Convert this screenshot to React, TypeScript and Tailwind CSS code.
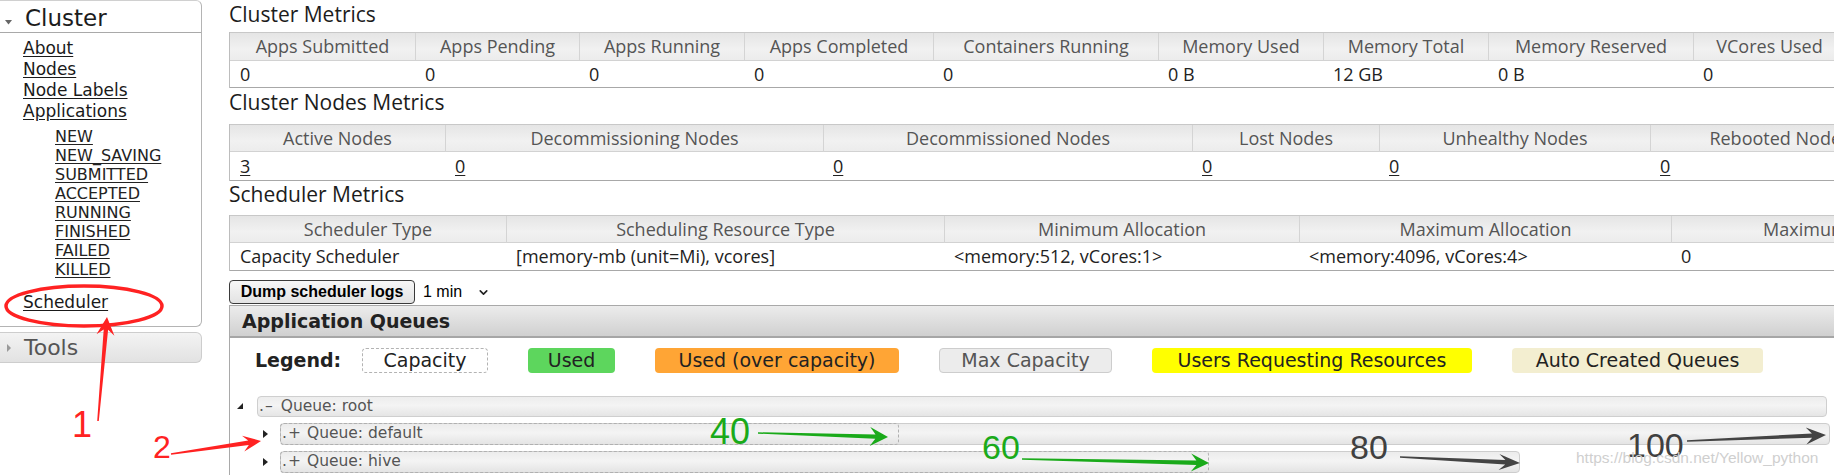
import React from "react";
import { ChevronDown } from "lucide-react";

type P = [number, number];

function arrowPoints(
  x1: number,
  y1: number,
  x2: number,
  y2: number,
  headLen: number,
  headHalf: number,
  tailHalf: number,
  shaftHalf: number
): string {
  const dx = x2 - x1;
  const dy = y2 - y1;
  const L = Math.hypot(dx, dy);
  const ux = dx / L;
  const uy = dy / L;
  const px = -uy;
  const py = ux;
  const bx = x2 - ux * headLen;
  const by = y2 - uy * headLen;
  const nx = bx + ux * headLen * 0.3;
  const ny = by + uy * headLen * 0.3;
  const pts: P[] = [
    [x1 + px * tailHalf, y1 + py * tailHalf],
    [nx + px * shaftHalf, ny + py * shaftHalf],
    [bx + px * headHalf, by + py * headHalf],
    [x2, y2],
    [bx - px * headHalf, by - py * headHalf],
    [nx - px * shaftHalf, ny - py * shaftHalf],
    [x1 - px * tailHalf, y1 - py * tailHalf],
  ];
  return pts.map((p) => `${p[0].toFixed(1)},${p[1].toFixed(1)}`).join(" ");
}

const t1Cols =
  "grid grid-cols-[185px_164px_165px_189px_225px_165px_165px_205px_152px_180px_200px]";
const t2Cols = "grid grid-cols-[215px_378px_369px_187px_271px_258px_220px]";
const t3Cols = "grid grid-cols-[276px_438px_355px_372px_496px]";

const headBg = "bg-[linear-gradient(to_bottom,#e5e5e5,#f1f1f1_60%,#ececec)]";

function HeadCell({ children, first }: { children: React.ReactNode; first?: boolean }) {
  return (
    <div
      className={
        first
          ? "flex items-center justify-center whitespace-nowrap text-[#555]"
          : "flex items-center justify-center whitespace-nowrap text-[#555] border-l border-[#d4d4d4]"
      }
    >
      {children}
    </div>
  );
}

function DataCell({ children, link }: { children: React.ReactNode; link?: boolean }) {
  return (
    <div className="flex items-center pl-[10px] whitespace-nowrap text-[#222]">
      {link ? <span className="underline underline-offset-2">{children}</span> : children}
    </div>
  );
}

function Sidebar() {
  const links = ["About", "Nodes", "Node Labels", "Applications"];
  const states = [
    "NEW",
    "NEW_SAVING",
    "SUBMITTED",
    "ACCEPTED",
    "RUNNING",
    "FINISHED",
    "FAILED",
    "KILLED",
  ];
  return (
    <aside className="w-[202px] shrink-0 font-['DejaVu_Sans',Verdana,sans-serif]">
      <div className="h-[327px] rounded-tr-[6px] rounded-br-[6px] border-t border-r border-b border-t-[#d0d0d0] border-r-[#b4b4b4] border-b-[#b4b4b4]">
        <div className="h-[32px] border-b border-[#a9a9a9] flex items-center pt-[2px] rounded-tr-[6px]">
          <svg width="25" height="20" viewBox="0 0 25 20" className="shrink-0">
            <polygon points="5,12 12,12 8.5,16.5" fill="#666" />
          </svg>
          <span className="text-[23px] leading-[28px] text-[#1c1c1c]">Cluster</span>
        </div>
        <div className="pl-[23px] pt-[5px] text-[#1a1a1a]">
          {links.map((l) => (
            <div key={l} className="text-[17px] leading-[21px]">
              <span className="underline underline-offset-[2px]">{l}</span>
            </div>
          ))}
          <div className="mt-[5px] pl-[32px]">
            {states.map((s) => (
              <div key={s} className="text-[16px] leading-[19px] text-[#222]">
                <span className="underline underline-offset-[2px]">{s}</span>
              </div>
            ))}
          </div>
          <div className="mt-[13px] text-[17px] leading-[21px]">
            <span className="underline underline-offset-[2px]">Scheduler</span>
          </div>
        </div>
      </div>
      <div className="mt-[5px] h-[31px] rounded-r-[6px] border border-l-0 border-[#cdcdcd] bg-[linear-gradient(to_bottom,#f3f3f3,#e2e2e2)] flex items-center">
        <svg width="24" height="20" viewBox="0 0 24 20" className="shrink-0">
          <polygon points="7,6 7,14 11,10" fill="#9a9a9a" />
        </svg>
        <span className="text-[22px] leading-[26px] text-[#555]">Tools</span>
      </div>
    </aside>
  );
}

function Main() {
  const sans = "font-['Open_Sans','Noto_Sans',sans-serif]";
  return (
    <main className={`ml-[27px] flex-1 min-w-0 flex flex-col ${sans}`}>
      {/* Cluster Metrics */}
      <div className="h-[32px] pt-[1px] text-[21px] leading-[26px] text-[#1c1c1c] whitespace-nowrap">
        Cluster Metrics
      </div>
      <div className="w-max border-l border-[#bdbdbd] text-[18px]">
        <div className={`${t1Cols} h-[29px] border-t border-b border-t-[#c8c8c8] border-b-[#d2d2d2] ${headBg}`}>
          <HeadCell first>Apps Submitted</HeadCell>
          <HeadCell>Apps Pending</HeadCell>
          <HeadCell>Apps Running</HeadCell>
          <HeadCell>Apps Completed</HeadCell>
          <HeadCell>Containers Running</HeadCell>
          <HeadCell>Memory Used</HeadCell>
          <HeadCell>Memory Total</HeadCell>
          <HeadCell>Memory Reserved</HeadCell>
          <HeadCell>VCores Used</HeadCell>
          <HeadCell>VCores Total</HeadCell>
          <HeadCell>VCores Reserved</HeadCell>
        </div>
        <div className={`${t1Cols} h-[27px] border-b border-[#a8a8a8] bg-white`}>
          <DataCell>0</DataCell>
          <DataCell>0</DataCell>
          <DataCell>0</DataCell>
          <DataCell>0</DataCell>
          <DataCell>0</DataCell>
          <DataCell>0 B</DataCell>
          <DataCell>12 GB</DataCell>
          <DataCell>0 B</DataCell>
          <DataCell>0</DataCell>
          <DataCell>12</DataCell>
          <DataCell>0</DataCell>
        </div>
      </div>

      {/* Cluster Nodes Metrics */}
      <div className="h-[36px] pt-[1px] text-[21px] leading-[26px] text-[#1c1c1c] whitespace-nowrap">
        Cluster Nodes Metrics
      </div>
      <div className="w-max border-l border-[#bdbdbd] text-[18px]">
        <div className={`${t2Cols} h-[28px] border-t border-b border-t-[#c8c8c8] border-b-[#d2d2d2] ${headBg}`}>
          <HeadCell first>Active Nodes</HeadCell>
          <HeadCell>Decommissioning Nodes</HeadCell>
          <HeadCell>Decommissioned Nodes</HeadCell>
          <HeadCell>Lost Nodes</HeadCell>
          <HeadCell>Unhealthy Nodes</HeadCell>
          <HeadCell>Rebooted Nodes</HeadCell>
          <HeadCell>Shutdown Nodes</HeadCell>
        </div>
        <div className={`${t2Cols} h-[29px] border-b border-[#a8a8a8] bg-white`}>
          <DataCell link>3</DataCell>
          <DataCell link>0</DataCell>
          <DataCell link>0</DataCell>
          <DataCell link>0</DataCell>
          <DataCell link>0</DataCell>
          <DataCell link>0</DataCell>
          <DataCell link>0</DataCell>
        </div>
      </div>

      {/* Scheduler Metrics */}
      <div className="h-[34px] text-[21px] leading-[26px] text-[#1c1c1c] whitespace-nowrap">
        Scheduler Metrics
      </div>
      <div className="w-max border-l border-[#bdbdbd] text-[18px]">
        <div className={`${t3Cols} h-[28px] border-t border-b border-t-[#c8c8c8] border-b-[#d2d2d2] ${headBg}`}>
          <HeadCell first>Scheduler Type</HeadCell>
          <HeadCell>Scheduling Resource Type</HeadCell>
          <HeadCell>Minimum Allocation</HeadCell>
          <HeadCell>Maximum Allocation</HeadCell>
          <HeadCell>Maximum Cluster Application Priority</HeadCell>
        </div>
        <div className={`${t3Cols} h-[28px] border-b border-[#a8a8a8] bg-white`}>
          <DataCell>Capacity Scheduler</DataCell>
          <DataCell>[memory-mb (unit=Mi), vcores]</DataCell>
          <DataCell>&lt;memory:512, vCores:1&gt;</DataCell>
          <DataCell>&lt;memory:4096, vCores:4&gt;</DataCell>
          <DataCell>0</DataCell>
        </div>
      </div>

      {/* Dump logs row */}
      <div className="mt-[9px] h-[24px] flex items-center font-['Liberation_Sans',Arial,sans-serif] text-black">
        <div className="w-[186px] h-[24px] rounded-[4px] border border-[#3a3a3a] bg-[linear-gradient(to_bottom,#f7f7f7,#e3e3e3)] flex items-center justify-center font-bold text-[16px] whitespace-nowrap">
          Dump scheduler logs
        </div>
        <span className="ml-[8px] text-[16px]">1 min</span>
        <ChevronDown className="ml-[15px] mt-[1px]" size={13} strokeWidth={3} color="#222" />
      </div>

      {/* Application Queues */}
      <div className="mt-[1px] flex-1 border-l border-[#a9a9a9] flex flex-col font-['DejaVu_Sans',Verdana,sans-serif]">
        <div className="h-[33px] shrink-0 border-t border-t-[#a9a9a9] border-b-2 border-b-[#a6a6a6] bg-[linear-gradient(to_bottom,#ececec,#d0d0d0)] flex items-center pl-[12px] font-bold text-[19px] text-[#222] whitespace-nowrap">
          Application Queues
        </div>

        <div className="mt-[10px] h-[25px] shrink-0 flex items-center pl-[25px] text-[19px] whitespace-nowrap">
          <div className="w-[107px] font-bold text-[#222]">Legend:</div>
          <div className="flex gap-[40px]">
            <div className="w-[126px] h-[25px] rounded-[4px] border border-dashed border-[#b3b3b3] bg-white flex items-center justify-center text-[#222]">
              Capacity
            </div>
            <div className="w-[87px] h-[25px] rounded-[4px] bg-[#5dd65d] flex items-center justify-center text-[#222]">
              Used
            </div>
            <div className="w-[244px] h-[25px] rounded-[4px] bg-[#ffa535] flex items-center justify-center text-[#222]">
              Used (over capacity)
            </div>
            <div className="w-[173px] h-[25px] rounded-[4px] border border-[#cdcdcd] bg-[#ececec] flex items-center justify-center text-[#555]">
              Max Capacity
            </div>
            <div className="w-[320px] h-[25px] rounded-[4px] bg-[#ffff00] flex items-center justify-center text-[#222]">
              Users Requesting Resources
            </div>
            <div className="w-[251px] h-[25px] rounded-[4px] bg-[#f3eed0] flex items-center justify-center text-[#222]">
              Auto Created Queues
            </div>
          </div>
        </div>

        {/* root */}
        <div className="mt-[23px] h-[21px] shrink-0 flex items-center">
          <div className="w-[27px] shrink-0 flex items-center pl-[7px]">
            <svg width="7" height="7" viewBox="0 0 7 7">
              <polygon points="6,0 6,6 0,6" fill="#222" />
            </svg>
          </div>
          <div className="mr-[7px] flex-1 h-full rounded-[4px] border border-[#cfcfcf] bg-[linear-gradient(to_bottom,#ededed,#f4f4f4_45%,#e5e5e5)] flex items-center text-[15.5px] text-[#555] whitespace-nowrap">
            <span className="ml-[1px]">.</span>
            <span className="ml-[1px]">–</span>
            <span className="ml-[8px]">Queue: root</span>
          </div>
        </div>

        {/* default */}
        <div className="mt-[6px] h-[22px] shrink-0 flex items-center">
          <div className="w-[50px] shrink-0 flex items-center pl-[33px]">
            <svg width="5" height="8" viewBox="0 0 5 8">
              <polygon points="0,0 5,4 0,8" fill="#222" />
            </svg>
          </div>
          <div className="mr-[4px] flex-1 h-full">
            <div className="relative w-full h-full rounded-[4px] border border-[#cdcdcd] bg-[linear-gradient(to_bottom,#ececec,#f4f4f4_45%,#e4e4e4)]">
              <div className="absolute -top-px -bottom-px -left-px w-[40%] rounded-[4px] border border-dashed border-[#b0b0b0] flex items-center text-[15.5px] text-[#555] whitespace-nowrap">
                <span className="ml-[1px]">.</span>
                <span className="ml-[1px]">+</span>
                <span className="ml-[6px]">Queue: default</span>
              </div>
            </div>
          </div>
        </div>

        {/* hive */}
        <div className="mt-[6px] h-[22px] shrink-0 flex items-center">
          <div className="w-[50px] shrink-0 flex items-center pl-[33px]">
            <svg width="5" height="8" viewBox="0 0 5 8">
              <polygon points="0,0 5,4 0,8" fill="#222" />
            </svg>
          </div>
          <div className="mr-[4px] flex-1 h-full">
            <div className="relative w-[80%] h-full rounded-[4px] border border-[#cdcdcd] bg-[linear-gradient(to_bottom,#ececec,#f4f4f4_45%,#e4e4e4)]">
              <div className="absolute -top-px -bottom-px -left-px w-[75%] rounded-[4px] border border-dashed border-[#b0b0b0] flex items-center text-[15.5px] text-[#555] whitespace-nowrap">
                <span className="ml-[1px]">.</span>
                <span className="ml-[1px]">+</span>
                <span className="ml-[6px]">Queue: hive</span>
              </div>
            </div>
          </div>
        </div>
      </div>
    </main>
  );
}

function Annotations() {
  return (
    <div className="pointer-events-none absolute inset-0">
      <svg width="1834" height="475" viewBox="0 0 1834 475" className="absolute left-0 top-0">
        <ellipse cx="84" cy="306" rx="78" ry="20" fill="none" stroke="#ff2222" strokeWidth="3.5" />
        <polygon points={arrowPoints(98, 421, 107, 317, 18, 9, 0.8, 2.2)} fill="#ff2222" />
        <polygon points={arrowPoints(171, 454, 261, 441, 18, 8, 0.8, 2.2)} fill="#ff2222" />
        <polygon points={arrowPoints(758, 433, 888, 437, 18, 9.5, 0.7, 2.2)} fill="#1aaa1a" />
        <polygon points={arrowPoints(1022, 459, 1209, 463, 18, 9, 0.7, 2.2)} fill="#1aaa1a" />
        <polygon points={arrowPoints(1400, 457, 1520, 463, 21, 8, 0.7, 2.2)} fill="#444444" />
        <polygon points={arrowPoints(1687, 441, 1826, 435, 20, 8.5, 0.7, 2.2)} fill="#444444" />
      </svg>
      <div className="absolute left-[72px] top-[407px] text-[36px] leading-none text-[#ff2222] font-['Liberation_Sans',Arial,sans-serif]">
        1
      </div>
      <div className="absolute left-[153px] top-[431px] text-[32px] leading-none text-[#ff2222] font-['Liberation_Sans',Arial,sans-serif]">
        2
      </div>
      <div className="absolute left-[710px] top-[414px] text-[36px] leading-none text-[#1aaa1a] font-['Liberation_Sans',Arial,sans-serif]">
        40
      </div>
      <div className="absolute left-[982px] top-[430px] text-[34px] leading-none text-[#1aaa1a] font-['Liberation_Sans',Arial,sans-serif]">
        60
      </div>
      <div className="absolute left-[1350px] top-[430px] text-[34px] leading-none text-[#404040] font-['Liberation_Sans',Arial,sans-serif]">
        80
      </div>
      <div className="absolute left-[1627px] top-[428px] text-[34px] leading-none text-[#404040] font-['Liberation_Sans',Arial,sans-serif]">
        100
      </div>
      <div className="absolute left-[1576px] top-[449px] text-[15.5px] leading-[18px] text-[#cfcfcf] font-['Liberation_Sans',Arial,sans-serif] whitespace-nowrap">
        https://blog.csdn.net/Yellow_python
      </div>
    </div>
  );
}

export default function App() {
  return (
    <div className="relative w-[1834px] h-[475px] overflow-hidden bg-white flex">
      <Sidebar />
      <Main />
      <Annotations />
    </div>
  );
}
